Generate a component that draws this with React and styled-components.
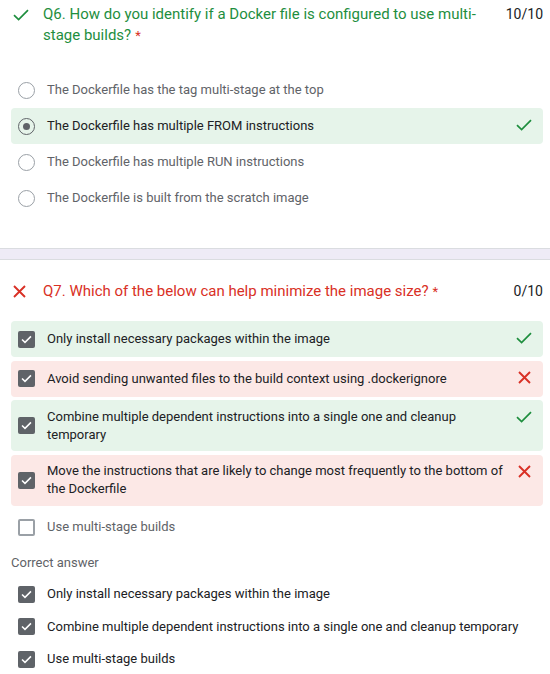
import styled, { createGlobalStyle } from "styled-components";

const GlobalStyle = createGlobalStyle`
  body {
    margin: 0;
    background: #fff;
    font-family: Roboto, "Noto Sans", Arial, sans-serif;
  }
`;

const q6Options = [
  { text: "The Dockerfile has the tag multi-stage at the top" },
  { text: "The Dockerfile has multiple FROM instructions", selected: true, result: "right" },
  { text: "The Dockerfile has multiple RUN instructions" },
  { text: "The Dockerfile is built from the scratch image" },
];

const q7Options = [
  { text: "Only install necessary packages within the image", selected: true, result: "right" },
  { text: "Avoid sending unwanted files to the build context using .dockerignore", selected: true, result: "wrong" },
  { text: "Combine multiple dependent instructions into a single one and cleanup temporary", selected: true, result: "right" },
  { text: "Move the instructions that are likely to change most frequently to the bottom of the Dockerfile", selected: true, result: "wrong" },
  { text: "Use multi-stage builds" },
];

const q7Correct = [
  "Only install necessary packages within the image",
  "Combine multiple dependent instructions into a single one and cleanup temporary",
  "Use multi-stage builds",
];

const CheckMark = ({ w = 16, h = 12, color = "#1e8e3e", stroke = 1.7 }) => (
  <svg width={w} height={h} viewBox="0 0 16 12">
    <polyline
      points="1,6.2 5.6,10.6 15,1.2"
      fill="none"
      stroke={color}
      strokeWidth={stroke}
    />
  </svg>
);

const CrossMark = ({ size = 13, color = "#d93025", stroke = 1.9 }) => (
  <svg width={size} height={size} viewBox="0 0 13 13">
    <path d="M1 1 12 12 M12 1 1 12" fill="none" stroke={color} strokeWidth={stroke} />
  </svg>
);

const Radio = ({ checked }) => (
  <RadioOuter $checked={checked}>{checked && <RadioDot />}</RadioOuter>
);

const Checkbox = ({ checked }) =>
  checked ? (
    <CheckFilled>
      <svg width="11" height="9" viewBox="0 0 16 12">
        <polyline points="1.5,6 5.8,10.2 14.5,1.5" fill="none" stroke="#fff" strokeWidth="2.2" />
      </svg>
    </CheckFilled>
  ) : (
    <CheckEmpty />
  );

const OptionList = ({ options, type, gap }) => (
  <List $gap={gap}>
    {options.map((o) => (
      <Option key={o.text} $result={o.result}>
        <Control>
          {type === "radio" ? <Radio checked={o.selected} /> : <Checkbox checked={o.selected} />}
        </Control>
        <OptionText $selected={o.selected}>{o.text}</OptionText>
        <Verdict>
          {o.result === "right" && <CheckMark />}
          {o.result === "wrong" && <CrossMark />}
        </Verdict>
      </Option>
    ))}
  </List>
);

const App = () => {
  return (
    <>
      <GlobalStyle />
      <Section $top={4}>
        <Header>
          <HeaderIcon>
            <CheckMark />
          </HeaderIcon>
          <Title $tone="right">
            Q6. How do you identify if a Docker file is configured to use multi-stage builds?
            <Required>*</Required>
          </Title>
          <Score>10/10</Score>
        </Header>
        <Spacer $h={26} />
        <OptionList options={q6Options} type="radio" gap={0} />
      </Section>

      <Band />

      <Section $top={21}>
        <Header>
          <HeaderIcon>
            <CrossMark />
          </HeaderIcon>
          <Title $tone="wrong">
            Q7. Which of the below can help minimize the image size?
            <Required>*</Required>
          </Title>
          <Score>0/10</Score>
        </Header>
        <Spacer $h={19} />
        <OptionList options={q7Options} type="checkbox" gap={3.5} />
        <CorrectLabel>Correct answer</CorrectLabel>
        <CorrectList>
          {q7Correct.map((t) => (
            <CorrectRow key={t}>
              <Control>
                <Checkbox checked />
              </Control>
              <OptionText $selected>{t}</OptionText>
            </CorrectRow>
          ))}
        </CorrectList>
      </Section>
    </>
  );
};

const Section = styled.section`
  padding: ${(p) => p.$top}px 7px 0 11px;
`;

const Header = styled.div`
  display: flex;
  align-items: flex-start;
`;

const HeaderIcon = styled.div`
  width: 16px;
  height: 21px;
  display: flex;
  align-items: center;
  margin-left: 2px;
  margin-right: 14px;
  flex-shrink: 0;
`;

const Title = styled.div`
  flex: 1;
  font-size: 15px;
  line-height: 21px;
  color: ${(p) => (p.$tone === "right" ? "#1e8e3e" : "#d93025")};
  padding-right: 18px;
`;

const Required = styled.span`
  color: #d93025;
  margin-left: 4px;
  font-size: 13px;
`;

const Score = styled.div`
  font-size: 14px;
  line-height: 21px;
  color: #202124;
  flex-shrink: 0;
`;

const Spacer = styled.div`
  height: ${(p) => p.$h}px;
`;

const List = styled.div`
  display: flex;
  flex-direction: column;
  gap: ${(p) => p.$gap}px;
`;

const Option = styled.div`
  display: flex;
  align-items: center;
  min-height: 36px;
  box-sizing: border-box;
  padding: 7.5px 11px 7.5px 7px;
  border-radius: 4px;
  background: ${(p) =>
    p.$result === "right" ? "#e6f4ea" : p.$result === "wrong" ? "#fce8e6" : "transparent"};
`;

const Control = styled.div`
  width: 17px;
  display: flex;
  justify-content: center;
  margin-right: 12px;
  flex-shrink: 0;
`;

const OptionText = styled.div`
  flex: 1;
  font-size: 13px;
  line-height: 18px;
  color: ${(p) => (p.$selected ? "#202124" : "#5f6368")};
`;

const Verdict = styled.div`
  width: 16px;
  margin-left: 8px;
  display: flex;
  justify-content: center;
  align-self: flex-start;
  margin-top: 3px;
  flex-shrink: 0;
`;

const RadioOuter = styled.div`
  width: 17px;
  height: 17px;
  box-sizing: border-box;
  border-radius: 50%;
  border: 1.5px solid ${(p) => (p.$checked ? "#5f6368" : "#9aa0a6")};
  display: flex;
  align-items: center;
  justify-content: center;
`;

const RadioDot = styled.div`
  width: 7px;
  height: 7px;
  border-radius: 50%;
  background: #5f6368;
`;

const CheckFilled = styled.div`
  width: 17px;
  height: 17px;
  border-radius: 2px;
  background: #5f6368;
  display: flex;
  align-items: center;
  justify-content: center;
`;

const CheckEmpty = styled.div`
  width: 17px;
  height: 17px;
  box-sizing: border-box;
  border-radius: 2px;
  border: 2px solid #9aa0a6;
`;

const Band = styled.div`
  margin-top: 32px;
  height: 12px;
  background: #eeebf6;
  border-top: 1px solid #dadce0;
  border-bottom: 1px solid #dadce0;
  box-sizing: border-box;
`;

const CorrectLabel = styled.div`
  font-size: 13px;
  line-height: 20px;
  color: #5f6368;
  margin-top: 8px;
`;

const CorrectList = styled.div`
  display: flex;
  flex-direction: column;
  margin-top: 5px;
`;

const CorrectRow = styled.div`
  display: flex;
  align-items: center;
  height: 32.5px;
  padding-left: 7px;
`;

export default App;
